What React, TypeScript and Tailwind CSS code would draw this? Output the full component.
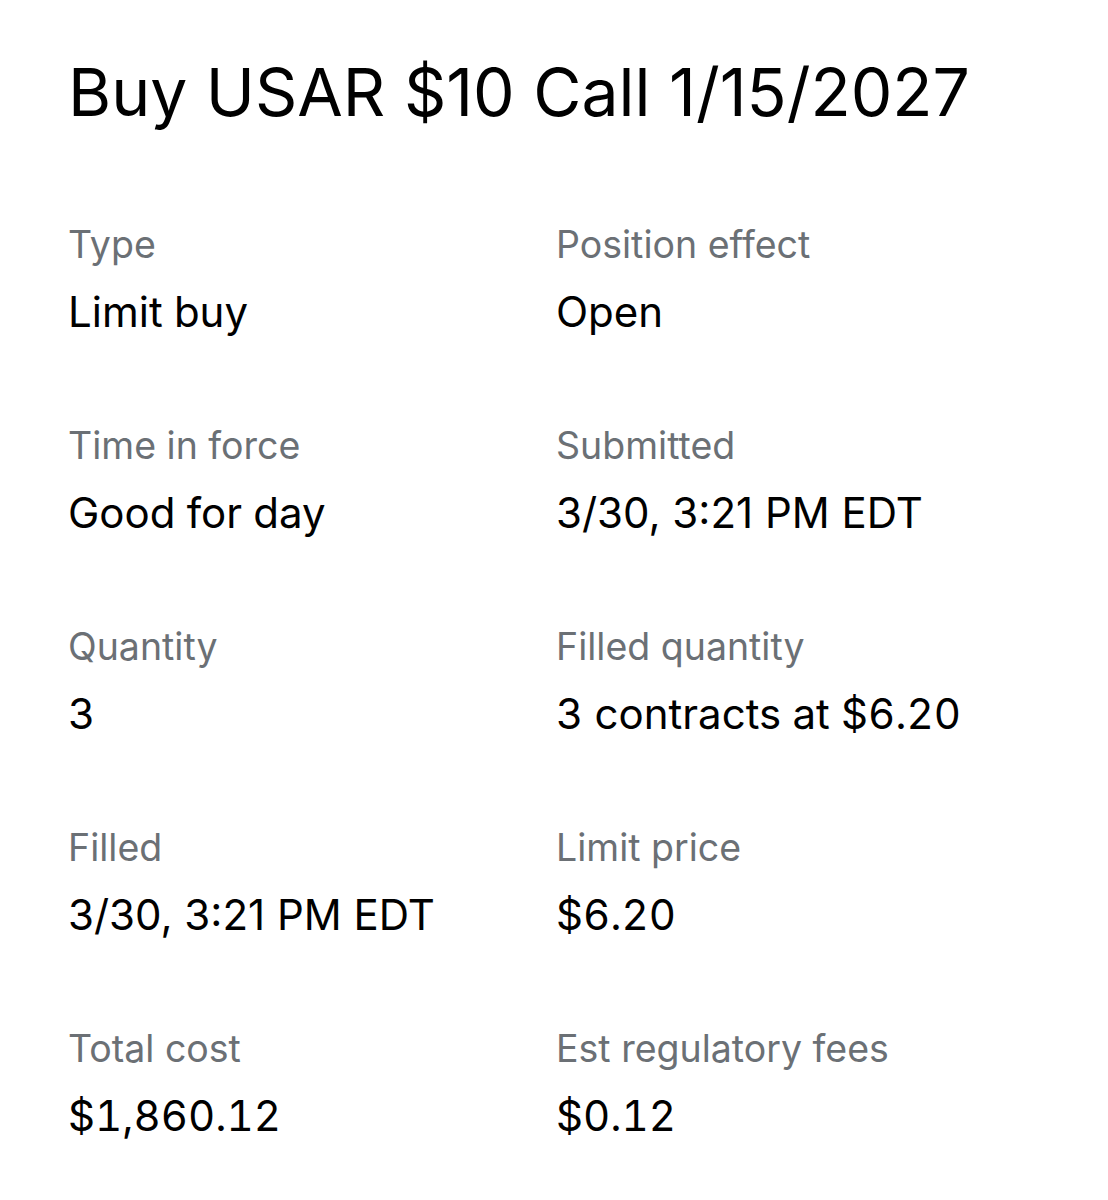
const rows: [string, string, string, string][] = [
  ['Type', 'Limit buy', 'Position effect', 'Open'],
  ['Time in force', 'Good for day', 'Submitted', '3/30, 3:21 PM EDT'],
  ['Quantity', '3', 'Filled quantity', '3 contracts at $6.20'],
  ['Filled', '3/30, 3:21 PM EDT', 'Limit price', '$6.20'],
  ['Total cost', '$1,860.12', 'Est regulatory fees', '$0.12'],
]

function Field({ label, value }: { label: string; value: string }) {
  // dates render narrower in the source, money uses tabular figures
  const isDate = value.includes('EDT')
  return (
    <div className="flex flex-col">
      <span className="text-[37.5px] leading-[44px] text-[#6b7075]">{label}</span>
      <span
        className={
          isDate
            ? 'mt-[21px] text-[42px] leading-[48px] text-black'
            : 'mt-[21px] text-[42px] leading-[48px] text-black tabular-nums'
        }
      >
        {value}
      </span>
    </div>
  )
}

export default function App() {
  return (
    <div className="min-h-[1200px] w-[1108px] bg-white pl-[68px] pt-[52px] font-['Inter',sans-serif]">
      <h1 className="text-[66px] font-normal leading-[80px] text-black">Buy USAR $10 Call 1/15/2027</h1>
      <div className="mt-[91px] flex flex-col gap-[88px]">
        {rows.map(([l1, v1, l2, v2]) => (
          <div key={l1} className="grid grid-cols-[488px_1fr]">
            <Field label={l1} value={v1} />
            <Field label={l2} value={v2} />
          </div>
        ))}
      </div>
    </div>
  )
}
